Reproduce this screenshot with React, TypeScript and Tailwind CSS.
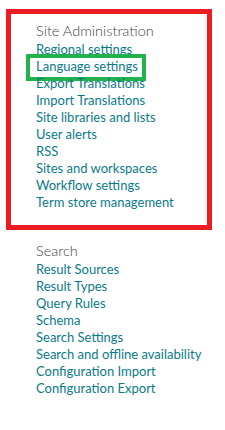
const siteAdmin = [
  'Regional settings',
  'Language settings',
  'Export Translations',
  'Import Translations',
  'Site libraries and lists',
  'User alerts',
  'RSS',
  'Sites and workspaces',
  'Workflow settings',
  'Term store management',
]

const search = [
  'Result Sources',
  'Result Types',
  'Query Rules',
  'Schema',
  'Search Settings',
  'Search and offline availability',
  'Configuration Import',
  'Configuration Export',
]

export default function App() {
  return (
    <div className="w-[225px] h-[430px] bg-white pt-[9px] pl-[6px] font-['Lato',sans-serif]">
      {/* Site Administration — marked in red */}
      <div className="w-[206px] h-[221px] border-[5px] border-[#ed1c24] pl-[25px] pt-[7px]">
        <h2 className="text-[14.5px] leading-[20px] font-light text-[#444444]">Site Administration</h2>
        <ul>
          {siteAdmin.map(item => (
            <li key={item} className="relative text-[13px] leading-[17px] text-[#0b7a8a]">
              {item === 'Language settings' && (
                <span className="absolute left-[-10px] top-[-4px] w-[120px] h-[27px] border-[4px] border-[#22b14c]" />
              )}
              <a className="relative">{item}</a>
            </li>
          ))}
        </ul>
      </div>

      {/* Search */}
      <div className="pl-[30px] pt-[11px]">
        <h2 className="text-[14.5px] leading-[20px] font-light text-[#444444]">Search</h2>
        <ul>
          {search.map(item => (
            <li key={item} className="text-[13px] leading-[17px] text-[#0b7a8a]">
              <a>{item}</a>
            </li>
          ))}
        </ul>
      </div>
    </div>
  )
}
